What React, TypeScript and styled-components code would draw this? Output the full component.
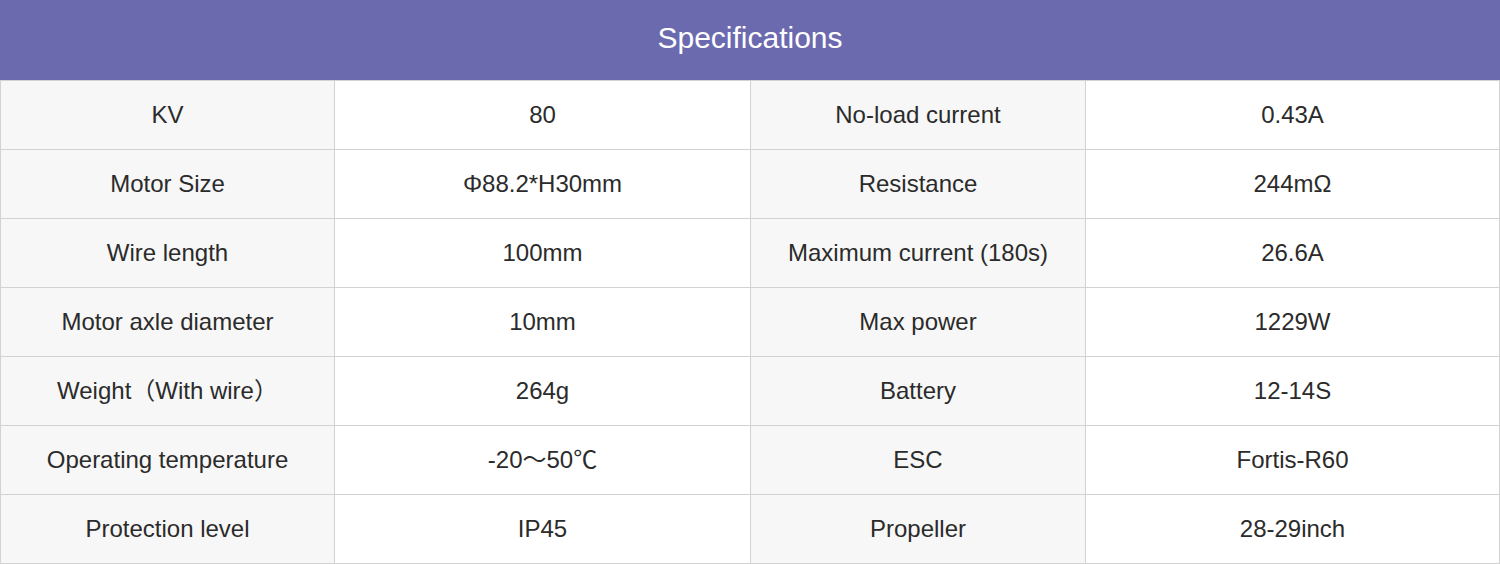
import React from 'react';
import styled, { createGlobalStyle } from 'styled-components';

const GlobalStyle = createGlobalStyle`
  html, body {
    margin: 0;
    padding: 0;
    background: #ffffff;
  }
  body {
    font-family: "Liberation Sans", Arial, "Noto Sans CJK SC", sans-serif;
  }
`;

const PageContainer = styled.div`
  width: 1500px;
`;

const Header = styled.div`
  height: 80px;
  background: #6c6aaf;
  color: #ffffff;
  font-size: 30px;
  line-height: 1;
  display: flex;
  align-items: center;
  justify-content: center;
  padding-bottom: 4px;
  box-sizing: border-box;
`;

const SpecGrid = styled.div`
  display: grid;
  grid-template-columns: 333px 415px 334px 413px;
  grid-auto-rows: 68px;
  gap: 1px;
  padding: 1px;
  background: #d2d2d2;
`;

const Cell = styled.div<{ $label?: boolean }>`
  display: flex;
  align-items: center;
  justify-content: center;
  background: ${(p) => (p.$label ? '#f7f7f7' : '#ffffff')};
  color: #2b2b2b;
  font-size: 24px;
  line-height: 24px;
  white-space: nowrap;
`;

interface SpecRow {
  leftLabel: string;
  leftValue: string;
  rightLabel: string;
  rightValue: string;
}

const specs: SpecRow[] = [
  { leftLabel: 'KV', leftValue: '80', rightLabel: 'No-load current', rightValue: '0.43A' },
  { leftLabel: 'Motor Size', leftValue: 'Φ88.2*H30mm', rightLabel: 'Resistance', rightValue: '244mΩ' },
  { leftLabel: 'Wire length', leftValue: '100mm', rightLabel: 'Maximum current (180s)', rightValue: '26.6A' },
  { leftLabel: 'Motor axle diameter', leftValue: '10mm', rightLabel: 'Max power', rightValue: '1229W' },
  { leftLabel: 'Weight（With wire）', leftValue: '264g', rightLabel: 'Battery', rightValue: '12-14S' },
  { leftLabel: 'Operating temperature', leftValue: '-20～50℃', rightLabel: 'ESC', rightValue: 'Fortis-R60' },
  { leftLabel: 'Protection level', leftValue: 'IP45', rightLabel: 'Propeller', rightValue: '28-29inch' },
];

const App: React.FC = () => {
  return (
    <PageContainer>
      <GlobalStyle />
      <Header>Specifications</Header>
      <SpecGrid>
        {specs.map((row) => (
          <React.Fragment key={row.leftLabel}>
            <Cell $label>{row.leftLabel}</Cell>
            <Cell>{row.leftValue}</Cell>
            <Cell $label>{row.rightLabel}</Cell>
            <Cell>{row.rightValue}</Cell>
          </React.Fragment>
        ))}
      </SpecGrid>
    </PageContainer>
  );
};

export default App;
